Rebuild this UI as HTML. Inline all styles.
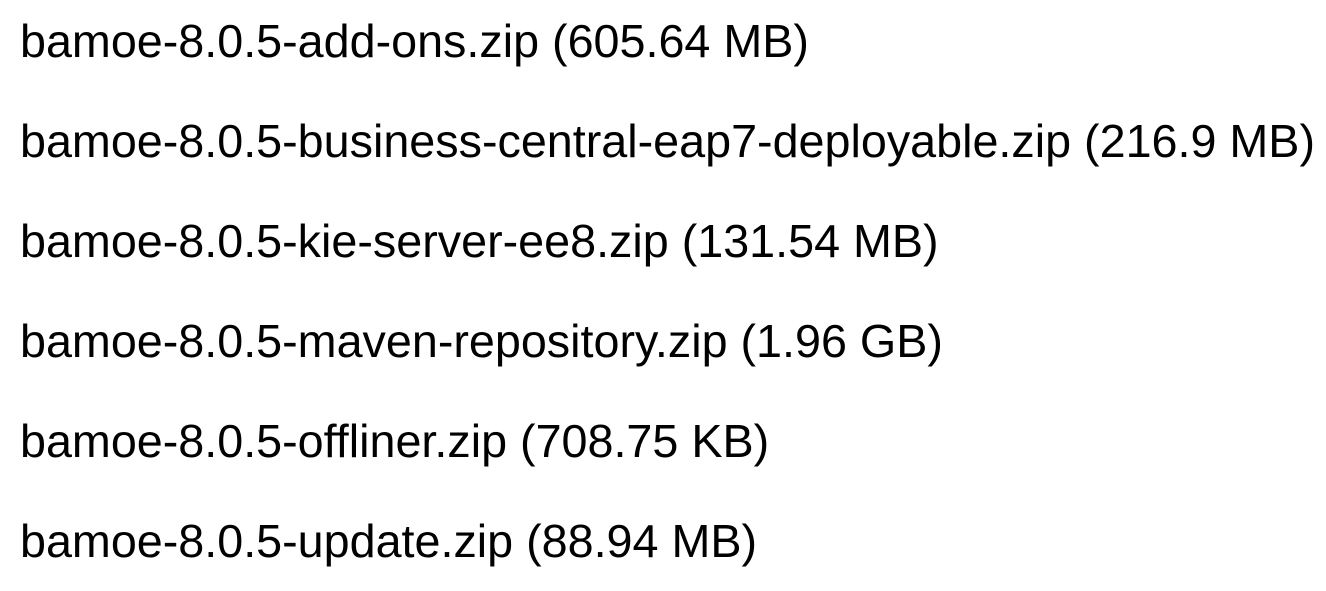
<!DOCTYPE html>
<html><head><meta charset="utf-8"><style>
html,body{margin:0;padding:0;background:#fff;width:1326px;height:591px;overflow:hidden}
.l{position:absolute;left:20px;font-family:"Liberation Sans",sans-serif;font-size:46.7px;line-height:100px;height:100px;color:#000;white-space:nowrap}
</style></head><body>
<div class="l" style="top:-9px">bamoe-8.0.5-add-ons.zip (605.64 MB)</div>
<div class="l" style="top:91px">bamoe-8.0.5-business-central-eap7-deployable.zip (216.9 MB)</div>
<div class="l" style="top:191px">bamoe-8.0.5-kie-server-ee8.zip (131.54 MB)</div>
<div class="l" style="top:291px">bamoe-8.0.5-maven-repository.zip (1.96 GB)</div>
<div class="l" style="top:391px">bamoe-8.0.5-offliner.zip (708.75 KB)</div>
<div class="l" style="top:491px">bamoe-8.0.5-update.zip (88.94 MB)</div>
</body></html>
